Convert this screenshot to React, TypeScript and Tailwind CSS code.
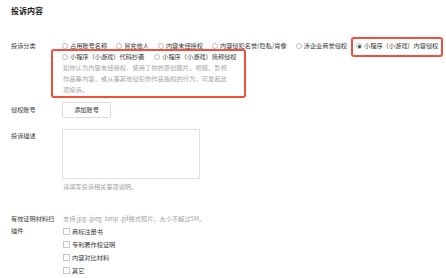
const font = "font-['Noto_Sans_CJK_SC','Noto_Sans',sans-serif]";

const firstLine = [
  { label: "占用账号名称" },
  { label: "冒充他人" },
  { label: "内容未经授权" },
  { label: "内容侵犯名誉/隐私/肖像" },
  { label: "涉企业商誉侵权" },
  { label: "小程序（小游戏）内容侵权", checked: true },
];

const secondLine = ["小程序（小游戏）代码抄袭", "小程序（小游戏）简称侵权"];

const proofs = ["商标注册书", "专利著作权证明", "内容对比材料", "其它"];

function Radio({ label, checked }: { label: string; checked?: boolean }) {
  return (
    <div className="flex items-center">
      <span className="mr-[2px] flex h-[6px] w-[6px] items-center justify-center rounded-full border-[0.5px] border-[#bdbdbd] bg-white">
        {checked && <span className="h-[3px] w-[3px] rounded-full bg-[#444]" />}
      </span>
      <span>{label}</span>
    </div>
  );
}

function Label({ children }: { children: React.ReactNode }) {
  return (
    <div className="w-[51px] shrink-0 pl-[11px]">
      <div className="w-[46px] text-[#3a3a3a]">{children}</div>
    </div>
  );
}

export default function App() {
  return (
    <div className={`relative h-[278px] w-[446px] overflow-hidden bg-white text-[6.2px] text-[#353535] ${font}`}>
      <div className="mt-[5px] pl-[11px] text-[8px] font-bold leading-[12px] text-[#222]">投诉内容</div>

      {/* 投诉分类 */}
      <div className="mt-[24px] flex leading-[10px]">
        <Label>投诉分类</Label>
        <div className="pl-[11px]">
          <div className="flex h-[10px] gap-[9px]">
            {firstLine.map((o) => (
              <Radio key={o.label} label={o.label} checked={o.checked} />
            ))}
          </div>
          <div className="flex h-[11px] items-center gap-[10px]">
            {secondLine.map((l) => (
              <Radio key={l} label={l} />
            ))}
          </div>
          <p className="w-[165px] pl-[1px] leading-[11px] tracking-[0.12px] text-[#a3a3a3]">
            如你认为内容未经授权，使用了你的原创图片、视频、影视作品等内容，或从事其他侵犯你作品版权的行为，可发起此项投诉。
          </p>
        </div>
      </div>

      {/* 侵权账号 */}
      <div className="mt-[7px] flex items-center">
        <Label>侵权账号</Label>
        <div className="pl-[11px]">
          <button className="flex h-[16px] w-[49px] items-center justify-center rounded-[1px] border-[0.5px] border-[#dcdcdc] bg-white text-[#353535]">
            添加账号
          </button>
        </div>
      </div>

      {/* 投诉描述 */}
      <div className="mt-[11px] flex">
        <div className="pt-[2px]">
          <Label>投诉描述</Label>
        </div>
        <div className="pl-[11px]">
          <div className="h-[50px] w-[138px] border-[0.5px] border-[#e0e0e0]" />
          <div className="mt-[3px] pl-[1px] leading-[10px] text-[#a3a3a3]">请填写投诉相关事项说明。</div>
        </div>
      </div>

      {/* 有效证明材料扫描件 */}
      <div className="mt-[21px] flex leading-[12px]">
        <Label>有效证明材料扫描件</Label>
        <div className="pl-[11px]">
          <div className="pl-[1px] text-[#a3a3a3]">支持.jpg .jpeg .bmp .gif格式照片，大小不超过5M。</div>
          {proofs.map((p) => (
            <div key={p} className="flex h-[13px] items-center pl-[1px]">
              <span className="mr-[2px] h-[7px] w-[7px] border-[0.5px] border-[#c8c8c8] bg-white" />
              <span>{p}</span>
            </div>
          ))}
        </div>
      </div>

      {/* annotation boxes */}
      <div className="pointer-events-none absolute left-[351px] top-[37px] h-[20px] w-[92px] rounded-[3px] border-2 border-[#f04f3e]" />
      <div className="pointer-events-none absolute left-[51px] top-[49px] h-[49px] w-[195px] rounded-[3px] border-2 border-[#f04f3e]" />
    </div>
  );
}
